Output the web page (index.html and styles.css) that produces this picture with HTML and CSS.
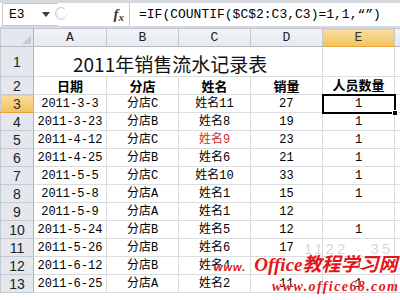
FILE: index.html
```html
<!DOCTYPE html>
<html lang="zh-CN">
<head>
  <meta charset="UTF-8">
  <link rel="stylesheet" href="styles.css">
</head>
<body>
  <div class="fbar">
    <div class="namebox">
      <span>E3</span>
      <svg class="drop" width="8" height="5" viewBox="0 0 8 5"><path d="M0 0H8L4 5Z" fill="#3c3c3c"/></svg>
    </div>
    <span class="knob"></span>
    <span class="fx"><i>f</i><i class="x">x</i></span>
    <div class="formula">=IF(COUNTIF($C$2:C3,C3)=1,1,“”)</div>
  </div>

  <div class="sheet">
    <table class="grid">
      <colgroup>
        <col class="c-rh"><col class="c-a"><col class="c-n"><col class="c-n"><col class="c-n"><col class="c-n"><col>
      </colgroup>
      <tr class="colhead">
        <th class="corner"><svg width="9" height="9" viewBox="0 0 9 9"><path d="M9 0V9H0Z" fill="#c9ccd1"/></svg></th>
        <th>A</th><th>B</th><th>C</th><th>D</th><th class="sel">E</th><th></th>
      </tr>
      <tr class="r1">
        <th>1</th><td colspan="4" class="title">2011年销售流水记录表</td><td></td><td></td>
      </tr>
      <tr class="hd">
        <th>2</th><td>日期</td><td>分店</td><td>姓名</td><td>销量</td><td>人员数量</td><td></td>
      </tr>
      <tr>
        <th class="sel">3</th><td>2011-3-3</td><td>分店C</td><td>姓名11</td><td>27</td>
        <td class="active">1<span class="handle"></span></td><td></td>
      </tr>
      <tr><th>4</th><td>2011-3-23</td><td>分店B</td><td>姓名8</td><td>19</td><td>1</td><td></td></tr>
      <tr><th>5</th><td>2011-4-12</td><td>分店C</td><td class="red">姓名9</td><td>23</td><td>1</td><td></td></tr>
      <tr><th>6</th><td>2011-4-25</td><td>分店B</td><td>姓名6</td><td>21</td><td>1</td><td></td></tr>
      <tr><th>7</th><td>2011-5-5</td><td>分店C</td><td>姓名10</td><td>33</td><td>1</td><td></td></tr>
      <tr><th>8</th><td>2011-5-8</td><td>分店A</td><td>姓名1</td><td>15</td><td>1</td><td></td></tr>
      <tr><th>9</th><td>2011-5-9</td><td>分店A</td><td>姓名1</td><td>12</td><td></td><td></td></tr>
      <tr><th>10</th><td>2011-5-24</td><td>分店B</td><td>姓名5</td><td>12</td><td>1</td><td></td></tr>
      <tr><th>11</th><td>2011-5-26</td><td>分店B</td><td>姓名6</td><td>17</td><td></td><td></td></tr>
      <tr><th>12</th><td>2011-6-12</td><td>分店B</td><td>姓名4</td><td></td><td>1</td><td></td></tr>
      <tr><th>13</th><td>2011-6-25</td><td>分店A</td><td>姓名2</td><td>11</td><td>1</td><td></td></tr>
    </table>

    <div class="watermark">
      <div class="wm-gray">1122 · 35</div>
      <div class="wm-main"><span class="wm-www">www.</span>Office教程学习网</div>
      <div class="wm-url">www.office68.com</div>
    </div>
  </div>
</body>
</html>
```

FILE: styles.css
```css
* {
  box-sizing: border-box;
}

body {
  margin: 0;
  width: 400px;
  height: 300px;
  overflow: hidden;
  background: #fff;
  font-family: "Liberation Mono", "Noto Sans CJK SC", monospace;
  color: #000;
}

/* 编辑栏 */
.fbar {
  display: flex;
  align-items: stretch;
  height: 28px;
  border-top: 3px solid #d5d9df;
  border-bottom: 2px solid #d5d9df;
  background: #fff;
  position: relative;
}

.namebox {
  width: 56px;
  margin-left: 2px;
  padding: 0 8px 0 6px;
  display: flex;
  align-items: center;
  justify-content: space-between;
  border: 1px solid #c6cad0;
  border-right: none;
  font-size: 13px;
}

.knob {
  width: 12px;
  height: 13px;
  margin: 4px 0 0 -3px;
  border-radius: 50%;
  border: 1px solid #c9cdd3;
  border-right-color: transparent;
  background: radial-gradient(circle at 65% 40%, #fff 35%, #e3e6ea 100%);
}

.fx {
  width: 63px;
  display: flex;
  align-items: center;
  justify-content: flex-end;
  padding-right: 5px;
  border-right: 1px solid #c6cad0;
  font-family: "Liberation Serif", serif;
  font-weight: bold;
  font-size: 15px;
  color: #3a3a3a;
}

.fx .x {
  font-size: 11px;
  margin-top: 4px;
}

.formula {
  flex: 1;
  padding-left: 9px;
  display: flex;
  align-items: center;
  font-size: 13px;
  white-space: nowrap;
}

/* 表格 */
.sheet {
  position: relative;
}

.grid {
  border-collapse: collapse;
  table-layout: fixed;
  width: 406px;
}

.c-rh { width: 33px; }
.c-a { width: 73px; }
.c-n { width: 72px; }

.grid tr {
  height: 18px;
}

.grid td {
  border: 1px solid #dadcdd;
  padding: 0;
  text-align: center;
  font-size: 12px;
  line-height: 16px;
  white-space: nowrap;
}

.grid th {
  padding: 0;
  font-weight: normal;
  background: linear-gradient(#f1f3f6, #e6e9ee);
  border: 1px solid #c5cad2;
  color: #222;
}

.colhead th {
  font-size: 13px;
  border-color: #c5cad2;
  border-bottom-color: #b4bac4;
}

.grid tr > th:first-child {
  font-family: "Liberation Sans", sans-serif;
  font-size: 14px;
  background: #e4e8ee;
  border-right-color: #aeb4be;
}

.colhead th.corner {
  background: #e4e8ee;
  text-align: right;
  vertical-align: bottom;
  padding: 0 2px 2px 0;
}

.corner svg {
  display: block;
  margin-left: auto;
}

.grid th.sel,
.grid tr > th.sel:first-child {
  background: linear-gradient(#f9dc9c, #f2c35e);
  border-bottom-color: #e8a33a;
  color: #333;
}

.r1 {
  height: 36px;
}

.grid .title {
  text-align: left;
  padding-left: 39px;
  font-family: "Noto Sans CJK SC", "Liberation Sans", sans-serif;
  font-size: 19px;
  line-height: 24px;
  padding-top: 5px;
  color: #111;
}

.hd td {
  font-family: "Noto Sans CJK SC", sans-serif;
  font-weight: bold;
  font-size: 13px;
}

.grid td.red {
  color: #d62a2a;
}

.grid td.active {
  position: relative;
  border: 2px solid #000;
}

.handle {
  position: absolute;
  right: -4px;
  bottom: -4px;
  width: 6px;
  height: 6px;
  background: #000;
  border: 1px solid #fff;
}

/* 水印 */
.watermark {
  position: absolute;
  left: 214px;
  top: 214px;
  width: 186px;
  pointer-events: none;
}

.wm-gray {
  margin-left: 90px;
  font-family: "Liberation Sans", sans-serif;
  font-size: 15px;
  letter-spacing: 3px;
  color: rgba(150, 150, 150, 0.4);
  line-height: 14px;
}

.wm-main {
  margin-top: -1px;
  font-family: "Liberation Serif", "Noto Sans CJK SC", serif;
  font-style: italic;
  font-weight: bold;
  font-size: 19px;
  line-height: 20px;
  color: #e4161c;
  text-shadow: 0 0 1px #fff, 1px 1px 0 #fff;
  white-space: nowrap;
}

.wm-www {
  font-family: "Liberation Sans", sans-serif;
  font-size: 11px;
  letter-spacing: 1px;
  margin-right: 8px;
  color: #e4161c;
}

.wm-url {
  margin: 2px 0 0 58px;
  font-family: "Liberation Serif", serif;
  font-style: italic;
  font-weight: bold;
  font-size: 14px;
  letter-spacing: 1.4px;
  color: #e4161c;
  text-shadow: 0 0 1px #fff;
  white-space: nowrap;
}
```
